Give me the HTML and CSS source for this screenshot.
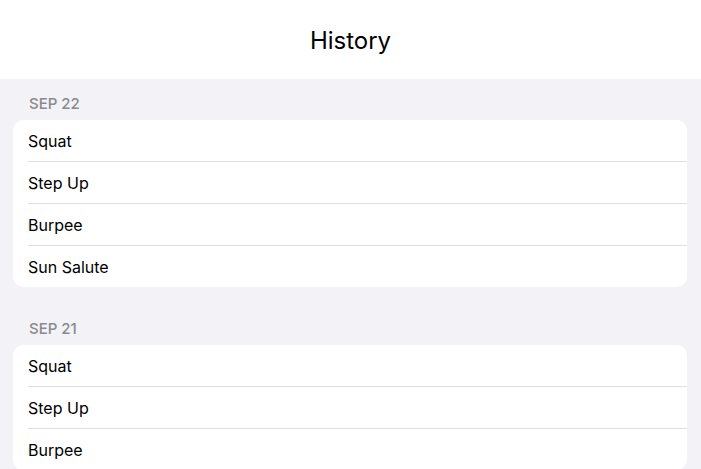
FILE: index.html
```html
<!DOCTYPE html>
<html>
<head>
<meta charset="utf-8">
<link rel="stylesheet" href="styles.css">
</head>
<body>
<header class="nav"><h1 class="title">History</h1></header>
<main class="content">
  <section class="group">
    <div class="group-header">SEP 22</div>
    <ul class="card">
      <li class="row">Squat</li>
      <li class="row">Step Up</li>
      <li class="row">Burpee</li>
      <li class="row">Sun Salute</li>
    </ul>
  </section>
  <section class="group">
    <div class="group-header">SEP 21</div>
    <ul class="card">
      <li class="row">Squat</li>
      <li class="row">Step Up</li>
      <li class="row">Burpee</li>
    </ul>
  </section>
</main>
</body>
</html>
```
FILE: styles.css
```css
html, body {
  margin: 0;
  padding: 0;
  background: #f2f2f7;
  font-family: Inter, "Liberation Sans", sans-serif;
  overflow: hidden;
  height: 469px;
}
.nav {
  height: 79px;
  background: #ffffff;
  display: flex;
  align-items: center;
  justify-content: center;
}
.title {
  margin: 0;
  font-size: 24px;
  font-weight: 400;
  color: #000;
  padding-top: 2px;
}
.content {
  padding: 0 14px 0 13px;
}
.group + .group {
  margin-top: 17px;
}
.group-header {
  height: 41px;
  box-sizing: border-box;
  display: flex;
  align-items: flex-end;
  padding: 0 0 7px 16px;
  font-size: 15px;
  font-weight: 500;
  line-height: 18px;
  color: #8a8a8e;
}
.card {
  list-style: none;
  margin: 0;
  padding: 0;
  background: #fff;
  border-radius: 10px;
  overflow: hidden;
}
.row {
  height: 41px;
  display: flex;
  align-items: center;
  margin-left: 15px;
  font-size: 16px;
  color: #000;
}
.row + .row {
  border-top: 1px solid #e0e0e4;
}
```
